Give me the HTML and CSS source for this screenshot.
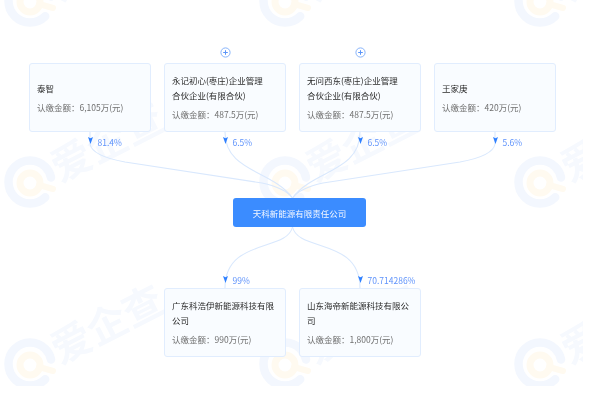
FILE: index.html
```html
<!DOCTYPE html>
<html lang="zh">
<head>
<meta charset="utf-8">
<title>天科新能源有限责任公司</title>
<link rel="stylesheet" href="styles.css">
</head>
<body>
<div class="page">
  <svg class="layer watermark" width="583" height="386" viewBox="0 0 583 386">
    <defs>
      <g id="wm">
        <circle class="wm-ring" cx="0" cy="0" r="21.5" pathLength="360" stroke-dasharray="303 57" transform="rotate(45)"/>
        <circle class="wm-lens" cx="0" cy="1" r="10"/>
        <line class="wm-handle" x1="9" y1="3" x2="23" y2="7"/>
        <text class="wm-text" x="0" y="0" transform="translate(76 -42) rotate(-27)">爱企查</text>
      </g>
    </defs>
    <use href="#wm" x="30" y="1"/><use href="#wm" x="285" y="1"/><use href="#wm" x="540" y="1"/>
    <use href="#wm" x="30" y="182"/><use href="#wm" x="285" y="182"/><use href="#wm" x="540" y="182"/>
    <use href="#wm" x="30" y="364"/><use href="#wm" x="285" y="364"/><use href="#wm" x="540" y="364"/>
  </svg>
  <svg class="layer links" width="583" height="386" viewBox="0 0 583 386">
    <path d="M90 132V144Q92 156 125 162L262 183Q285 188 292.5 198"/>
    <path d="M225 132C225 172 272 170 292.5 198"/>
    <path d="M360 132C360 172 313 170 292.5 198"/>
    <path d="M495 132V144Q493 156 460 162L323 183Q300 188 292.5 198"/>
    <path d="M292.5 227C298 252 360 238 360 288"/>
    <path d="M292.5 227C287 252 225 238 225 288"/>
  </svg>

  <div class="content">
    <div class="grid expand-row">
      <span></span>
      <svg class="plus" width="11" height="11" viewBox="0 0 11 11"><circle cx="5.5" cy="5.5" r="4.6"/><path d="M3.2 5.5H7.8M5.5 3.2V7.8"/></svg>
      <svg class="plus" width="11" height="11" viewBox="0 0 11 11"><circle cx="5.5" cy="5.5" r="4.6"/><path d="M3.2 5.5H7.8M5.5 3.2V7.8"/></svg>
      <span></span>
    </div>

    <div class="grid">
      <div class="card"><div class="name">泰智</div><div class="amount">认缴金额：6,105万(元)</div></div>
      <div class="card"><div class="name">永记初心(枣庄)企业管理<br>合伙企业(有限合伙)</div><div class="amount">认缴金额：487.5万(元)</div></div>
      <div class="card"><div class="name">无问西东(枣庄)企业管理<br>合伙企业(有限合伙)</div><div class="amount">认缴金额：487.5万(元)</div></div>
      <div class="card"><div class="name">王家庚</div><div class="amount">认缴金额：420万(元)</div></div>
    </div>

    <div class="grid ratio-row">
      <div class="ratio"><svg class="arrow" width="5" height="7" viewBox="0 0 5 7"><path d="M0 0L2.5 1.3L5 0L2.5 7Z"/></svg><span>81.4%</span></div>
      <div class="ratio"><svg class="arrow" width="5" height="7" viewBox="0 0 5 7"><path d="M0 0L2.5 1.3L5 0L2.5 7Z"/></svg><span>6.5%</span></div>
      <div class="ratio"><svg class="arrow" width="5" height="7" viewBox="0 0 5 7"><path d="M0 0L2.5 1.3L5 0L2.5 7Z"/></svg><span>6.5%</span></div>
      <div class="ratio"><svg class="arrow" width="5" height="7" viewBox="0 0 5 7"><path d="M0 0L2.5 1.3L5 0L2.5 7Z"/></svg><span>5.6%</span></div>
    </div>

    <div class="center-row"><div class="company">天科新能源有限责任公司</div></div>

    <div class="grid ratio-row lower">
      <span></span>
      <div class="ratio"><svg class="arrow" width="5" height="7" viewBox="0 0 5 7"><path d="M0 0L2.5 1.3L5 0L2.5 7Z"/></svg><span>99%</span></div>
      <div class="ratio"><svg class="arrow" width="5" height="7" viewBox="0 0 5 7"><path d="M0 0L2.5 1.3L5 0L2.5 7Z"/></svg><span>70.714286%</span></div>
      <span></span>
    </div>

    <div class="grid">
      <span></span>
      <div class="card"><div class="name">广东科浩伊新能源科技有限<br>公司</div><div class="amount">认缴金额：990万(元)</div></div>
      <div class="card"><div class="name">山东海帝新能源科技有限公<br>司</div><div class="amount">认缴金额：1,800万(元)</div></div>
      <span></span>
    </div>
  </div>
</div>
</body>
</html>
```
FILE: styles.css
```css
html, body {
  margin: 0;
  background: #fff;
}
body {
  width: 600px;
  height: 400px;
  overflow: hidden;
  font-family: "Noto Sans CJK SC", "Liberation Sans", sans-serif;
}
.page {
  position: relative;
  width: 600px;
  height: 400px;
  background: #fff;
  filter: blur(0.35px);
}
.layer {
  position: absolute;
  left: 0;
  top: 0;
}
.wm-ring {
  fill: none;
  stroke: #f3f7fe;
  stroke-width: 8.5;
  stroke-linecap: round;
}
.wm-lens {
  fill: none;
  stroke: #fffaf0;
  stroke-width: 7;
}
.wm-handle {
  stroke: #fffaf0;
  stroke-width: 6;
  stroke-linecap: round;
}
.wm-text {
  fill: #f6f9fe;
  font-size: 40px;
  font-weight: 700;
  text-anchor: middle;
  dominant-baseline: central;
}
.links path {
  fill: none;
  stroke: #d9e8fd;
  stroke-width: 1.1;
}
.content {
  position: relative;
  width: 527px;
  padding: 47px 0 0 29px;
}
.grid {
  display: grid;
  grid-template-columns: repeat(4, 122px);
  column-gap: 13px;
}
.expand-row {
  height: 16px;
  justify-items: center;
  align-items: start;
}
.plus circle {
  fill: #fff;
  stroke: #86b3fb;
  stroke-width: 1;
}
.plus path {
  fill: none;
  stroke: #5a94f8;
  stroke-width: 1;
}
.card {
  box-sizing: border-box;
  height: 68.5px;
  display: flex;
  flex-direction: column;
  justify-content: center;
  padding: 0 7px;
  background: #f9fcff;
  border: 1.5px solid #e1edfe;
  border-radius: 3px;
}
.name {
  font-size: 8.5px;
  line-height: 14.4px;
  color: #2b2b2b;
}
.amount {
  margin-top: 4.5px;
  font-size: 8.5px;
  line-height: 14.4px;
  color: #707070;
}
.ratio-row {
  height: 11px;
  margin-top: 5.5px;
}
.ratio-row.lower {
  margin-top: 48px;
}
.ratio {
  display: flex;
  align-items: flex-start;
  gap: 5px;
  padding-left: 58.5px;
  font-size: 8.5px;
  line-height: 11px;
  color: #5f93fb;
}
.arrow {
  flex: none;
}
.arrow path {
  fill: #2f80ff;
}
.lower .arrow {
  margin-top: 1px;
}
.center-row {
  margin: 50px 0 0 204px;
}
.company {
  box-sizing: border-box;
  width: 133px;
  height: 29px;
  display: flex;
  align-items: center;
  justify-content: center;
  border-radius: 3px;
  background: #3b8cff;
  color: #f4f8ff;
  font-size: 8.5px;
}
.lower + .grid {
  margin-top: 2px;
}
```
